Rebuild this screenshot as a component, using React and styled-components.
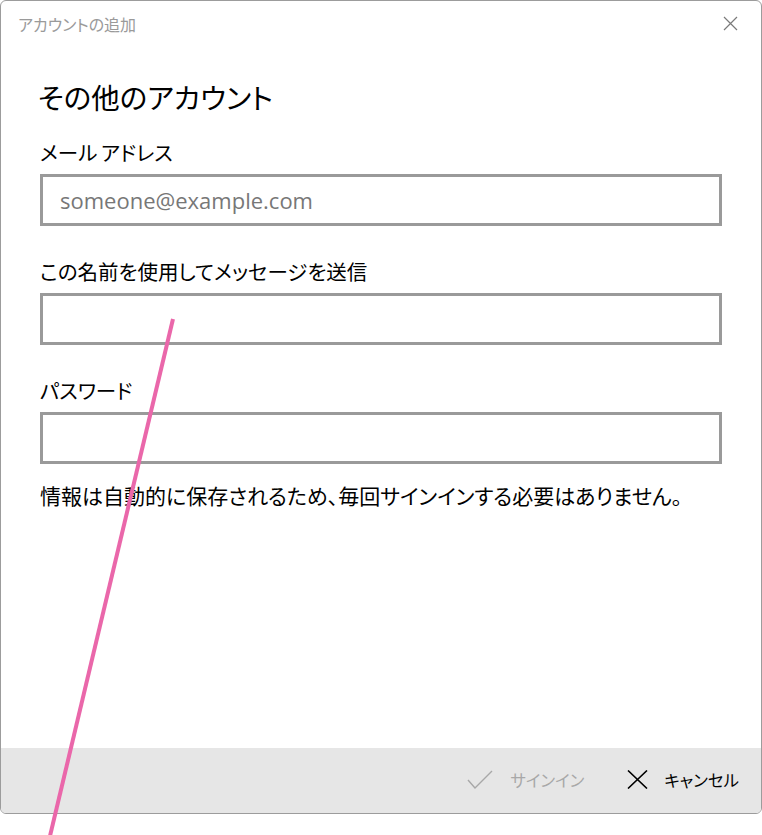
import styled, { createGlobalStyle } from 'styled-components';

const GlobalStyle = createGlobalStyle`
  html, body {
    margin: 0;
    padding: 0;
    background: #ffffff;
  }
  body {
    font-family: "Open Sans", "Noto Sans CJK JP", sans-serif;
    color: #000;
  }
  * {
    box-sizing: border-box;
  }
`;

const Page = styled.div`
  position: relative;
  width: 762px;
  height: 835px;
  overflow: hidden;
`;

const Window = styled.div`
  width: 762px;
  height: 814px;
  border: 1px solid #9c9c9c;
  border-radius: 6px;
  overflow: hidden;
  display: flex;
  flex-direction: column;
  background: #fff;
`;

const TitleBar = styled.div`
  height: 45px;
  display: flex;
  align-items: center;
  justify-content: space-between;
  padding: 0 23px 0 17px;
`;

const TitleText = styled.span`
  font-family: "Noto Sans CJK JP", sans-serif;
  font-size: 16px;
  font-feature-settings: "palt";
  color: #9a9a9a;
`;

const Content = styled.div`
  padding: 0 39px;
  display: flex;
  flex-direction: column;
`;

const Heading = styled.h1`
  margin: 33px 0 0 -2px;
  font-family: "Noto Sans CJK JP", sans-serif;
  font-feature-settings: "palt";
  font-weight: 400;
  font-size: 28.5px;
  line-height: 36px;
`;

const Label = styled.div`
  margin-top: ${p => p.$top}px;
  font-family: "Noto Sans CJK JP", sans-serif;
  font-feature-settings: "palt";
  font-size: 20.5px;
  line-height: 28px;
  word-spacing: -1px;
`;

const Field = styled.input`
  margin-top: 8px;
  width: 100%;
  height: 52px;
  border: 3px solid #9a9a9a;
  padding: 0 17px;
  font-family: "Open Sans", sans-serif;
  font-size: 22px;
  color: #000;
  background: #fff;
  outline: none;
  &::placeholder {
    color: #777;
  }
`;

const Note = styled.p`
  margin: 17px 0 0;
  font-family: "Noto Sans CJK JP", sans-serif;
  font-feature-settings: "palt";
  font-size: 21px;
  line-height: 28px;
`;

const Footer = styled.div`
  margin-top: auto;
  height: 65px;
  background: #e6e6e6;
  display: flex;
  align-items: center;
  justify-content: flex-end;
  padding: 0 22px 2px 0;
  gap: 43px;
`;

const FooterButton = styled.div`
  display: flex;
  align-items: center;
  gap: ${p => (p.$disabled ? 17 : 16)}px;
  font-family: "Noto Sans CJK JP", sans-serif;
  font-feature-settings: "palt";
  font-size: 16.5px;
  color: ${p => (p.$disabled ? '#a8a8a8' : '#000')};
`;

const Overlay = styled.svg`
  position: absolute;
  left: 0;
  top: 0;
  pointer-events: none;
`;

export default function App() {
  return (
    <Page>
      <GlobalStyle />
      <Window>
        <TitleBar>
          <TitleText>アカウントの追加</TitleText>
          <svg width="15" height="15" viewBox="0 0 15 15">
            <path d="M1 1 L14 14 M14 1 L1 14" stroke="#7a7a7a" strokeWidth="1.2" fill="none" />
          </svg>
        </TitleBar>
        <Content>
          <Heading>その他のアカウント</Heading>
          <Label $top={23}>メール アドレス</Label>
          <Field placeholder="someone@example.com" />
          <Label $top={31}>この名前を使用してメッセージを送信</Label>
          <Field />
          <Label $top={31}>パスワード</Label>
          <Field type="password" />
          <Note>情報は自動的に保存されるため、毎回サインインする必要はありません。</Note>
        </Content>
        <Footer>
          <FooterButton $disabled>
            <svg width="26" height="19" viewBox="0 0 26 19">
              <path d="M1 10 L8 18 L25 1" stroke="#a8a8a8" strokeWidth="1.4" fill="none" />
            </svg>
            サインイン
          </FooterButton>
          <FooterButton>
            <svg width="21" height="19" viewBox="0 0 21 19">
              <path d="M1 0.5 L20 18.5 M20 0.5 L1 18.5" stroke="#000" strokeWidth="1.6" fill="none" />
            </svg>
            キャンセル
          </FooterButton>
        </Footer>
      </Window>
      <Overlay width="762" height="835" viewBox="0 0 762 835">
        <line x1="173" y1="319" x2="50" y2="836" stroke="#ea67aa" strokeWidth="4" />
      </Overlay>
    </Page>
  );
}
